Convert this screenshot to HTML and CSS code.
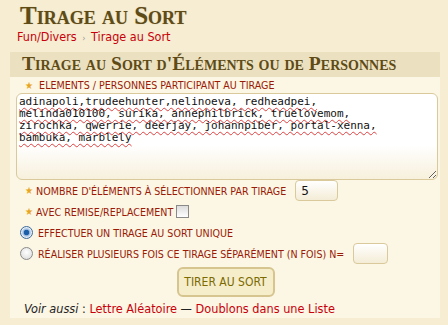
FILE: index.html
```html
<!DOCTYPE html>
<html lang="fr">
<head>
    <meta charset="UTF-8">
    <title>Tirage au Sort</title>
    <link rel="stylesheet" href="styles.css">
</head>
<body>
    <div class="page-head">
        <h1>Tirage au Sort</h1>
        <div class="crumbs"><a href="#">Fun/Divers</a> <span class="sep">›</span> <a href="#">Tirage au Sort</a></div>
    </div>

    <div class="panel">
        <h2>Tirage au Sort d'Éléments ou de Personnes</h2>
        <form class="panel-body">
            <label class="field-label" for="liste"><span class="star">★</span> ELEMENTS / PERSONNES PARTICIPANT AU TIRAGE</label>
            <textarea id="liste" spellcheck="false">adinapoli,trudeehunter,nelinoeva, redheadpei,
melinda010100, surika, annephilbrick, truelovemom,
zirochka, qwerrie, deerjay, johannpiber, portal-xenna,
bambuka, marblely</textarea>

            <div class="row">
                <span class="star">★</span>
                <label for="nombre">NOMBRE D'ÉLÉMENTS À SÉLECTIONNER PAR TIRAGE</label>
                <input type="text" id="nombre" class="small-input" value="5">
            </div>

            <div class="row">
                <span class="star">★</span>
                <label for="remise">AVEC REMISE/REPLACEMENT</label>
                <span class="check"></span>
            </div>

            <div class="row">
                <span class="radio on"></span>
                <label>EFFECTUER UN TIRAGE AU SORT UNIQUE</label>
            </div>

            <div class="row">
                <span class="radio"></span>
                <label>RÉALISER PLUSIEURS FOIS CE TIRAGE SÉPARÉMENT (N FOIS) N=</label>
                <input type="text" class="small-input n-input" value="">
            </div>

            <div class="actions">
                <button type="button">TIRER AU SORT</button>
            </div>

            <p class="see-also"><em>Voir aussi</em> : <a href="#">Lettre Aléatoire</a> — <a href="#">Doublons dans une Liste</a></p>
        </form>
    </div>
</body>
</html>
```

FILE: styles.css
```css
* {
    box-sizing: border-box;
}

body {
    margin: 0;
    background: #f6edd2;
    font-family: 'DejaVu Sans Condensed', 'DejaVu Sans', sans-serif;
    font-size: 10.6px;
    color: #333;
    height: 325px;
    overflow: hidden;
}

a {
    color: #c8000a;
    text-decoration: none;
}

.page-head {
    padding: 2px 17px 0;
    height: 52px;
}

h1 {
    margin: 0 0 0 3px;
    font-family: 'Liberation Serif', serif;
    font-variant: small-caps;
    font-weight: bold;
    font-size: 25px;
    line-height: 28px;
    color: #5f4b16;
    text-shadow: 0 0 1px rgba(95,75,22,0.3);
}

.crumbs {
    font-size: 12.5px;
    line-height: 14px;
}

.crumbs .sep {
    color: #999;
    font-size: 9px;
    margin: 0 2px;
}

.panel {
    margin: 0 8px 0 10px;
    background: #fcf6e4;
    height: 266px;
}

.panel h2 {
    margin: 0;
    padding: 0 12px;
    height: 25px;
    line-height: 24px;
    background: #ebe1c1;
    font-family: 'Liberation Serif', serif;
    font-variant: small-caps;
    font-weight: bold;
    font-size: 19.6px;
    color: #5f4b16;
}

.panel-body {
    padding: 1px 2px 0 6px;
}

.field-label {
    display: block;
    color: #9a1a06;
    line-height: 15px;
    padding-left: 9px;
}

.star {
    color: #e8a520;
    font-size: 10px;
    margin-right: 3px;
}

textarea {
    display: block;
    width: 100%;
    height: 87px;
    margin: 0;
    padding: 2px 2px 1px;
    border: 1px solid #d9c99b;
    border-radius: 6px;
    background: linear-gradient(#ffffff 60%, #f7f0dc);
    font-family: 'DejaVu Sans Mono', monospace;
    font-size: 11px;
    line-height: 12px;
    color: #111;
    resize: vertical;
    text-decoration: underline wavy #e04040;
    text-decoration-thickness: 1px;
    text-underline-offset: 2px;
}

.row {
    display: flex;
    align-items: center;
    height: 21px;
    padding-left: 9px;
    color: #9a1a06;
}

.row label {
    margin-right: 9px;
}

.small-input {
    width: 43px;
    height: 21px;
    border: 1px solid #d9c99b;
    border-radius: 4px;
    background: linear-gradient(#ffffff, #f4ecd6);
    font-family: 'DejaVu Sans', sans-serif;
    font-size: 12px;
    padding: 1px 5px;
    color: #111;
}

.n-input {
    width: 35px;
}

.check {
    width: 13px;
    height: 13px;
    border: 1px solid #8a8a8a;
    background: linear-gradient(#dcdcdc, #ffffff);
    margin-left: -6px;
}

.radio {
    width: 13px;
    height: 13px;
    border-radius: 50%;
    border: 1px solid #8a8a8a;
    background: radial-gradient(circle at 50% 40%, #ffffff, #d8d8d8);
    margin: 0 5px 0 -5px;
}

.radio.on {
    border-color: #3c6a9a;
    background: radial-gradient(circle, #1c5fa8 0 2.5px, #8fb3dc 3px, #e6eef7 5px);
}

.actions {
    text-align: center;
    margin-top: 3px;
}

button {
    font-family: 'DejaVu Sans Condensed', 'DejaVu Sans', sans-serif;
    font-size: 12px;
    color: #7b6a00;
    background: #f6edcb;
    border: 2px solid #d6c58f;
    border-radius: 6px;
    width: 98px;
    height: 30px;
    padding: 0;
    margin-left: -3px;
}

.see-also {
    margin: 4px 0 0 8px;
    font-size: 12.6px;
    color: #222;
}
```
